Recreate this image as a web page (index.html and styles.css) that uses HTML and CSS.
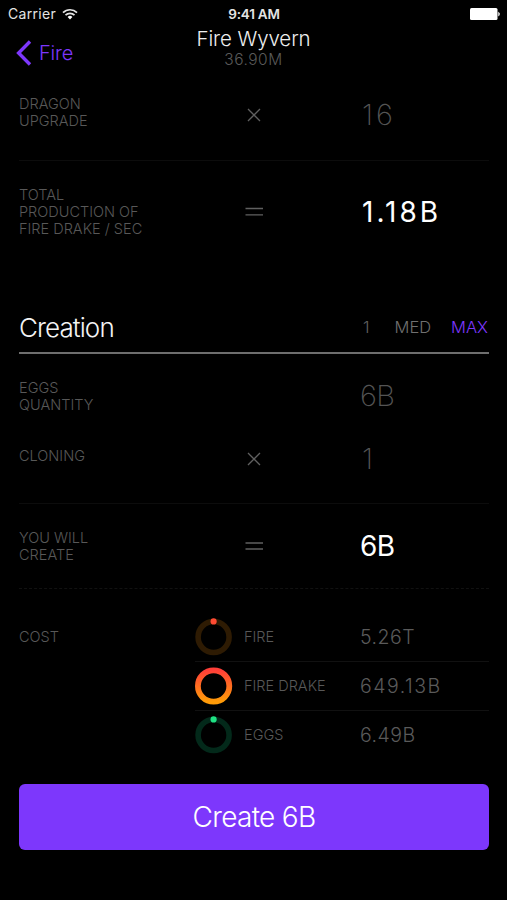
FILE: index.html
```html
<!DOCTYPE html>
<html lang="en">
<head>
    <meta charset="UTF-8">
    <meta name="viewport" content="width=device-width, initial-scale=1.0">
    <title>Fire Wyvern</title>
    <link rel="stylesheet" href="styles.css">
</head>
<body>
    <div class="status-bar">
        <div class="carrier">
            <span>Carrier</span>
            <svg class="wifi" width="16" height="12" viewBox="0 0 16 12">
                <path d="M1 4.6a10 10 0 0 1 14 0M3.5 7.2a6.4 6.4 0 0 1 9 0" fill="none" stroke="#e4e4e4" stroke-width="1.7"/>
                <path d="M8 11.4L5.6 9a3.4 3.4 0 0 1 4.8 0z" fill="#fff"/>
            </svg>
        </div>
        <div class="clock">9:41 AM</div>
        <svg class="battery" width="30" height="12" viewBox="0 0 30 12">
            <rect width="27.5" height="12" rx="1.5" fill="#fff"/>
            <path d="M28.3 4.2a2 2 0 0 1 0 3.8z" fill="#ddd" stroke="#ddd" stroke-width="0.6"/>
        </svg>
    </div>

    <div class="nav">
        <a class="back">
            <svg width="16" height="26" viewBox="0 0 16 26">
                <path d="M14 1.5L2.6 13L14 24.5" fill="none" stroke="#7d37fc" stroke-width="3.4"/>
            </svg>
            <span>Fire</span>
        </a>
        <div class="nav-title">
            <h1>Fire Wyvern</h1>
            <p>36.90M</p>
        </div>
    </div>

    <div class="container">
        <div class="row row-upgrade">
            <div class="label raised">DRAGON<br>UPGRADE</div>
            <svg class="op" width="38" height="14" viewBox="0 0 38 14">
                <path d="M13 1L25 13M25 1L13 13"/>
            </svg>
            <div class="value spaced">16</div>
        </div>
        <div class="row row-production">
            <div class="label">TOTAL<br>PRODUCTION OF<br>FIRE DRAKE / SEC</div>
            <svg class="op" width="38" height="14" viewBox="0 0 38 14">
                <path d="M10.5 3.5H28M10.5 9.8H28"/>
            </svg>
            <div class="value total spaced">1.18B</div>
        </div>

        <div class="section-head">
            <h2>Creation</h2>
            <div class="amounts">
                <span class="one">1</span>
                <span class="med">MED</span>
                <span class="max">MAX</span>
            </div>
        </div>

        <div class="row row-eggs">
            <div class="label">EGGS<br>QUANTITY</div>
            <div></div>
            <div class="value big">6B</div>
        </div>
        <div class="row row-cloning">
            <div class="label raised">CLONING</div>
            <svg class="op" width="38" height="14" viewBox="0 0 38 14">
                <path d="M13 1L25 13M25 1L13 13"/>
            </svg>
            <div class="value spaced">1</div>
        </div>
        <div class="row row-create">
            <div class="label">YOU WILL<br>CREATE</div>
            <svg class="op thick" width="38" height="14" viewBox="0 0 38 14">
                <path d="M10.5 4H28M10.5 10H28"/>
            </svg>
            <div class="value total big">6B</div>
        </div>

        <div class="cost">
            <div class="label cost-label">COST</div>
            <div class="cost-list">
                <div class="cost-row">
                    <svg width="38" height="38" viewBox="0 0 38 38">
                        <circle cx="18.6" cy="19" r="15.5" fill="none" stroke="#2e1b03" stroke-width="5.6"/>
                        <circle cx="18.6" cy="3.4" r="3.1" fill="#ff4b33"/>
                    </svg>
                    <span class="label">FIRE</span>
                    <span class="price">5.26T</span>
                </div>
                <div class="cost-row">
                    <svg width="38" height="38" viewBox="0 0 38 38">
                        <defs>
                            <linearGradient id="flame" x1="0" y1="0" x2="0" y2="1">
                                <stop offset="0" stop-color="#ff3f38"/>
                                <stop offset="1" stop-color="#ff9c08"/>
                            </linearGradient>
                        </defs>
                        <circle cx="18.6" cy="19" r="15.7" fill="none" stroke="url(#flame)" stroke-width="5.8"/>
                    </svg>
                    <span class="label">FIRE DRAKE</span>
                    <span class="price wide">649.13B</span>
                </div>
                <div class="cost-row">
                    <svg width="38" height="38" viewBox="0 0 38 38">
                        <circle cx="18.6" cy="19" r="15.5" fill="none" stroke="#03291a" stroke-width="5.6"/>
                        <circle cx="18.6" cy="3.4" r="3.1" fill="#1fe183"/>
                    </svg>
                    <span class="label">EGGS</span>
                    <span class="price">6.49B</span>
                </div>
            </div>
        </div>

        <button class="create-button">Create 6B</button>
    </div>
</body>
</html>
```
FILE: styles.css
```css
* {
    box-sizing: border-box;
}
body {
    font-family: Inter, "Liberation Sans", sans-serif;
    font-weight: 300;
    margin: 0;
    height: 900px;
    overflow: hidden;
    background-color: #000;
    color: #fff;
}
svg {
    display: block;
}
h1, h2, p {
    margin: 0;
    font-weight: 300;
}
.status-bar {
    display: grid;
    grid-template-columns: 1fr auto 1fr;
    align-items: center;
    height: 27px;
    padding: 0 7px 0 8px;
    font-size: 14px;
    color: #e4e4e4;
}
.carrier {
    display: flex;
    align-items: center;
    gap: 6px;
    font-weight: 400;
    letter-spacing: 0.3px;
}
.clock {
    font-weight: 600;
    font-size: 13.5px;
    letter-spacing: -0.2px;
}
.battery {
    justify-self: end;
}
.nav {
    display: grid;
    grid-template-columns: 1fr auto 1fr;
    height: 43px;
    padding: 0 16px;
}
.back {
    display: flex;
    align-items: center;
    gap: 7px;
    height: 51px;
    font-size: 20px;
    letter-spacing: -0.2px;
    color: #7d37fc;
}
.nav-title {
    padding-top: 1px;
    text-align: center;
}
.nav-title h1 {
    font-size: 20.5px;
    line-height: 21px;
    letter-spacing: -0.1px;
    color: #eee;
}
.nav-title p {
    font-size: 15.5px;
    line-height: 22px;
    letter-spacing: 0.5px;
    color: #5a5a5a;
}
.container {
    padding: 0 18px 0 19px;
}
.row {
    display: grid;
    grid-template-columns: 216px 126px 1fr;
    align-items: center;
}
.row-upgrade {
    height: 91px;
    border-bottom: 1px solid #0c0c0c;
}
.row-production {
    height: 101px;
}
.row-eggs {
    height: 60px;
    margin-top: 12px;
}
.row-cloning {
    height: 78px;
    padding-bottom: 12px;
    border-bottom: 1px solid #0c0c0c;
}
.row-create {
    height: 85px;
    border-bottom: 1px dashed #111;
}
.label {
    font-size: 14.5px;
    line-height: 17.2px;
    color: #585858;
}
.raised {
    padding-bottom: 6px;
}
.op path {
    fill: none;
    stroke: #606060;
    stroke-width: 1.3;
}
.thick path {
    stroke: #484848;
    stroke-width: 2;
}
.value {
    font-size: 29px;
    font-weight: 200;
    line-height: 34px;
    color: #545454;
}
.total {
    font-size: 28px;
    font-weight: 400;
    color: #fff;
}
.big {
    margin-left: -1px;
    letter-spacing: -0.6px;
}
.spaced {
    margin-left: 1px;
    letter-spacing: 3px;
}
.section-head {
    display: flex;
    justify-content: space-between;
    align-items: center;
    height: 52px;
    margin-top: 40px;
    border-bottom: 2px solid #6e6e6e;
}
.section-head h2 {
    font-size: 26px;
    letter-spacing: -0.9px;
    color: #f4f4f4;
}
.amounts {
    display: flex;
    padding-right: 1px;
    font-size: 16.5px;
    color: #606060;
}
.med {
    margin-left: 25px;
    color: #707070;
}
.max {
    margin-left: 20px;
    color: #7d37fc;
}
.cost {
    display: grid;
    grid-template-columns: 176px 1fr;
    margin-top: 23px;
}
.cost-label {
    line-height: 49px;
}
.cost-row {
    display: grid;
    grid-template-columns: 49px 117px 1fr;
    align-items: center;
    height: 49px;
}
.cost-row + .cost-row {
    border-top: 1px solid #111;
}
.price {
    margin-left: -1px;
    font-size: 19.5px;
    letter-spacing: 0.5px;
    color: #5a5a5a;
}
.wide {
    letter-spacing: 1.5px;
}
.create-button {
    display: block;
    width: 470px;
    height: 66px;
    margin-top: 25px;
    padding: 0;
    border: none;
    border-radius: 6px;
    background-color: #7d37fc;
    color: #fff;
    font-family: inherit;
    font-size: 28px;
    font-weight: 300;
    letter-spacing: -0.7px;
}
```
